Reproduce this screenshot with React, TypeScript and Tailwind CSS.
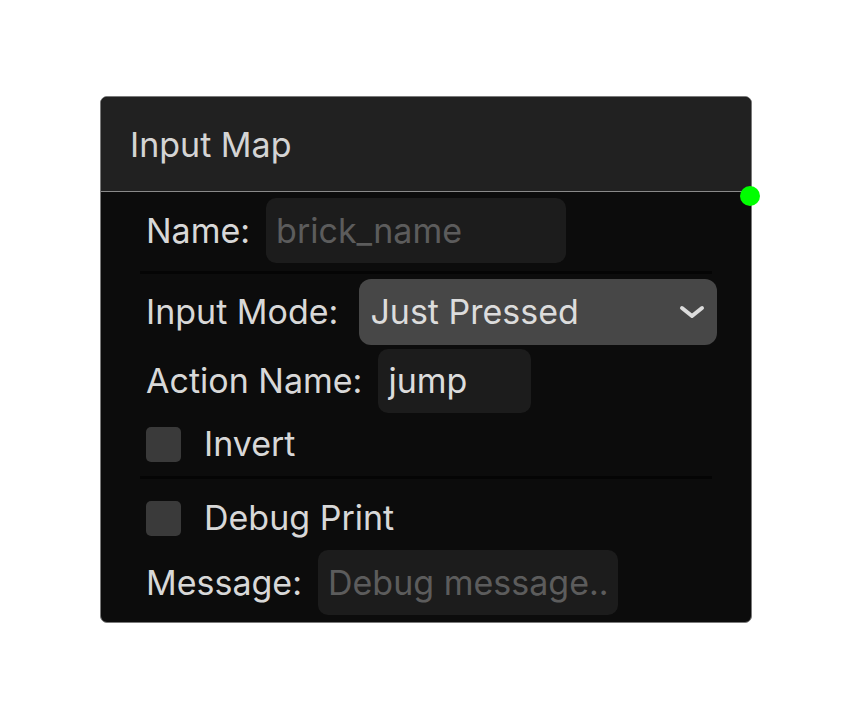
const font = { fontFamily: 'Inter, "Noto Sans", sans-serif' }

function Divider () {
  return <div className="mx-[-6px] h-[3px] bg-[#050505]" />
}

function Check ({ label }: { label: string }) {
  return (
    <label className="flex h-[58px] items-center gap-[23px]">
      <span className="h-[35px] w-[35px] rounded-[5px] bg-[#3a3a3a]" />
      <span className="text-[#d8d8d8]">{label}</span>
    </label>
  )
}

function Chevron () {
  return (
    <svg width="26" height="14" viewBox="0 0 26 14" fill="none" className="shrink-0">
      <polyline points="3,3 13,11 23,3" stroke="#dcdcdc" strokeWidth="4" strokeLinecap="round" strokeLinejoin="round" />
    </svg>
  )
}

export default function App () {
  return (
    <div className="flex h-[722px] w-[852px] items-start justify-center bg-white pt-[96px]" style={font}>
      <div className="relative w-[652px] whitespace-nowrap rounded-[7px] border border-[#7a7a7a] bg-[#0c0c0c] text-[34px] leading-none">
        <div className="flex h-[95px] items-center rounded-t-[6px] border-b border-[#8a8a8a] bg-[#212121] pl-[29px] pt-[2px] text-[#d4d4d4]">
          Input Map
        </div>
        <span className="absolute right-[-9px] top-[89px] h-[20px] w-[20px] rounded-full bg-[#00ff00]" />

        <div className="flex flex-col px-[45px] pb-[7px] pt-[6px]">
          <div className="flex items-center gap-[16px] pb-[8px]">
            <span className="text-[#d8d8d8]">Name:</span>
            <div className="flex h-[65px] w-[300px] items-center overflow-hidden rounded-[10px] bg-[#1c1c1c] px-[10px] text-[#5c5c5c]">
              brick_name
            </div>
          </div>
          <Divider />

          <div className="flex items-center gap-[21px] pt-[5px]">
            <span className="text-[#d8d8d8]">Input Mode:</span>
            <div className="mr-[-11px] flex h-[66px] flex-1 items-center justify-between rounded-[12px] bg-[#474747] pl-[11px] pr-[12px] text-[#dcdcdc]">
              Just Pressed
              <Chevron />
            </div>
          </div>

          <div className="flex items-center gap-[16px] pt-[4px]">
            <span className="text-[#d8d8d8]">Action Name:</span>
            <div className="flex h-[64px] w-[153px] items-center overflow-hidden rounded-[10px] bg-[#1c1c1c] px-[10px] text-[#dcdcdc]">
              jump
            </div>
          </div>

          <div className="pb-[3px] pt-[2px]">
            <Check label="Invert" />
          </div>
          <Divider />

          <div className="pt-[10px]">
            <Check label="Debug Print" />
          </div>

          <div className="flex items-center gap-[16px] pt-[3px]">
            <span className="text-[#d8d8d8]">Message:</span>
            <div className="flex h-[65px] w-[300px] items-center overflow-hidden rounded-[10px] bg-[#1c1c1c] px-[10px] text-[#5c5c5c]">
              Debug message..
            </div>
          </div>
        </div>
      </div>
    </div>
  )
}
